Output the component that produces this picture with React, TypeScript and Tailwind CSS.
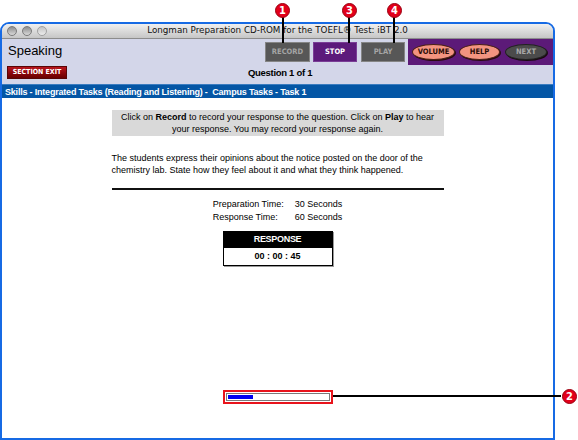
export default function App() {
  const cond = "font-['Liberation_Sans_Narrow','DejaVu_Sans_Condensed',Arial,sans-serif] font-bold";
  return (
    <div className="relative w-[578px] h-[440px] bg-white overflow-hidden font-['Liberation_Sans',Arial,sans-serif]">
      <div className="pt-[22px]">
        <div className="w-[555px] h-[418px] border-2 border-[#166ae4] rounded-t-[9px] overflow-hidden flex flex-col bg-white">
          {/* title bar */}
          <div className="relative h-[15px] shrink-0 bg-gradient-to-b from-[#f0f0f0] to-[#c6c6c6] border-b border-[#8c8c8c] flex items-center">
            <div className="flex gap-[5px] pl-[5px]">
              <span className="w-[10px] h-[10px] rounded-full border border-[#7b7b7b] bg-gradient-to-b from-[#8e8e8e] to-[#d9d9d9]" />
              <span className="w-[10px] h-[10px] rounded-full border border-[#7b7b7b] bg-gradient-to-b from-[#8e8e8e] to-[#d9d9d9]" />
              <span className="w-[10px] h-[10px] rounded-full border border-[#a0a0a0] bg-gradient-to-b from-[#c4c4c4] to-[#ececec]" />
            </div>
            <div className="absolute inset-0 flex items-center justify-center text-[8.75px] text-[#111] font-['DejaVu_Sans',sans-serif]">
              Longman Preparation CD-ROM for the TOEFL® Test: iBT 2.0
            </div>
          </div>
          {/* header */}
          <div className="h-[45px] shrink-0 bg-[#d3d6e9] flex flex-col">
            <div className="h-[26px] flex">
              <div className="pl-[6px] pt-[4px] text-[13px] leading-[16px] text-black">Speaking</div>
              <div className="ml-auto flex items-start pt-[3px]">
                <div className={`w-[45px] h-[20px] bg-[#575757] border border-[#858585] flex items-center justify-center text-[7.5px] text-[#a5a5a5] ${cond}`}>RECORD</div>
                <div className={`ml-[3px] w-[44px] h-[20px] bg-[#5c1a7b] border border-[#7a3d96] flex items-center justify-center text-[7.5px] text-white ${cond}`}>STOP</div>
                <div className={`ml-[4px] w-[44px] h-[20px] bg-[#575757] border border-[#858585] flex items-center justify-center text-[7.5px] text-[#a5a5a5] ${cond}`}>PLAY</div>
              </div>
              <div className="ml-[3px] w-[145px] h-[26px] bg-[#5c1a78] flex items-center pl-[4px] gap-[4px]">
                <div className={`w-[43px] h-[16px] rounded-[50%] bg-[#f39480] border border-[#4a2018] shadow-[1px_1px_0_#2a0a10] flex items-center justify-center text-[7.5px] text-[#2a0d08] ${cond}`}>VOLUME</div>
                <div className={`w-[41px] h-[16px] rounded-[50%] bg-[#f39480] border border-[#4a2018] shadow-[1px_1px_0_#2a0a10] flex items-center justify-center text-[7.5px] text-[#2a0d08] ${cond}`}>HELP</div>
                <div className={`ml-[1px] w-[42px] h-[16px] rounded-[50%] bg-[#4b4b4b] border border-[#222] shadow-[1px_1px_0_#1a0a10] flex items-center justify-center text-[7.5px] text-[#a8a8a8] ${cond}`}>NEXT</div>
              </div>
            </div>
            <div className="h-[19px] flex items-start">
              <div className={`ml-[5px] mt-[1px] w-[60px] h-[13px] bg-gradient-to-b from-[#b8141c] to-[#6a0000] border border-[#5a0505] flex items-center justify-center text-[7px] text-white ${cond}`}>SECTION EXIT</div>
              <div className="ml-[181px] mt-[2px] text-[9.5px] font-bold text-black leading-[12px] tracking-[-0.3px]">Question 1 of 1</div>
            </div>
          </div>
          {/* blue bar */}
          <div className="h-[14px] shrink-0 bg-[#0456a5] border-t border-[#3a7cc0] flex items-center pl-[3px] text-white text-[9px] font-bold tracking-[-0.2px] leading-[12px] whitespace-nowrap">
            Skills - Integrated Tasks (Reading and Listening) -&nbsp; Campus Tasks - Task 1
          </div>
          {/* content */}
          <div className="flex-1 flex flex-col items-center text-[9px] text-black">
            <div className="mt-[12px] w-[332px] bg-[#d9d9d9] text-center leading-[12px] py-[1px] whitespace-nowrap">
              Click on <b>Record</b> to record your response to the question. Click on <b>Play</b> to hear
              <br />
              your response. You may record your response again.
            </div>
            <div className="mt-[17px] w-[332px] leading-[11.5px] whitespace-nowrap">
              The students express their opinions about the notice posted on the door of the
              <br />
              chemistry lab. State how they feel about it and what they think happened.
            </div>
            <div className="mt-[12px] w-[332px] h-[2px] bg-[#111]" />
            <div className="mt-[8px] grid grid-cols-[82px_auto] leading-[13px] whitespace-nowrap">
              <div>Preparation Time:</div>
              <div>30 Seconds</div>
              <div>Response Time:</div>
              <div>60 Seconds</div>
            </div>
            <div className="mt-[7px] w-[110px] border border-black shadow-[1px_1px_0_#9a9a9a] font-bold text-center">
              <div className="h-[16px] bg-black text-white flex items-center justify-center tracking-[-0.3px]">RESPONSE</div>
              <div className="h-[17px] bg-white flex items-center justify-center">00 : 00 : 45</div>
            </div>
            <div className="mt-[124px] w-[110px] h-[14px] border-2 border-[#e8141c] p-[1px]">
              <div className="w-full h-full border border-[#7a7a7a] bg-white p-[1px]">
                <div className="w-[25px] h-full bg-[#0000f0]" />
              </div>
            </div>
          </div>
        </div>
      </div>

      {/* annotations */}
      <div className="absolute left-[282px] top-[16px] w-[2px] h-[27px] bg-black" />
      <div className="absolute left-[348px] top-[16px] w-[2px] h-[27px] bg-black" />
      <div className="absolute left-[393px] top-[16px] w-[2px] h-[27px] bg-black" />
      <div className="absolute left-[333px] top-[395px] w-[228px] h-[2px] bg-black" />
      {[
        { n: "1", x: 275, y: 3 },
        { n: "3", x: 342, y: 3 },
        { n: "4", x: 387, y: 3 },
        { n: "2", x: 562, y: 389 },
      ].map((c) => (
        <div
          key={c.n}
          className={`absolute w-[15px] h-[15px] rounded-full bg-[#e2001a] border border-[#9a0010] flex items-center justify-center text-white text-[11px] leading-none ${cond}`}
          style={{ left: c.x, top: c.y }}
        >
          {c.n}
        </div>
      ))}
    </div>
  );
}
